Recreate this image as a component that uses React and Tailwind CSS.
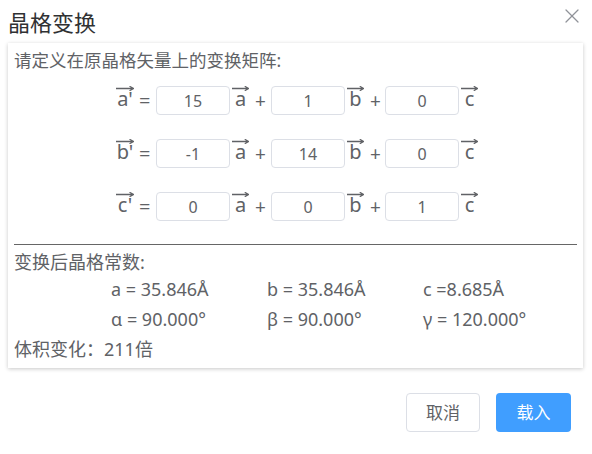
import { X } from 'lucide-react';

const font = { fontFamily: '"Noto Sans", "Noto Sans CJK SC", sans-serif' };

function Vec({ children, wide }) {
  return (
    <span className={`flex flex-col h-[29px] ${wide ? 'w-[18px]' : 'w-[17px]'}`}>
      <svg className="h-[5px] w-full shrink-0" viewBox="0 0 18 5" preserveAspectRatio="none">
        <path d="M0 2.5H17M13.5 0.3L17.6 2.5L13.5 4.7" fill="none" stroke="#606266" strokeWidth="1.3" />
      </svg>
      <span className="-mt-[2px] text-[20px] leading-[20px] text-center">{children}</span>
    </span>
  );
}

function Cell({ value }) {
  return (
    <div className="w-[74px] h-[29px] rounded-[4px] border border-[#dcdfe6] flex items-center justify-center text-[16px] text-[#606266]">
      {value}
    </div>
  );
}

const matrix = [
  ["a'", ['15', '1', '0']],
  ["b'", ['-1', '14', '0']],
  ["c'", ['0', '0', '1']],
];

export default function App() {
  return (
    <div className="w-[592px] h-[454px] bg-white text-[#606266]" style={font}>
      <div className="h-[43px] flex items-start justify-between pl-[8px] pr-[8px]">
        <span className="text-[22px] leading-[24px] mt-[10px] text-[#303133]">晶格变换</span>
        <X className="w-[24px] h-[24px] mt-[4px] text-[#909399]" strokeWidth={1.25} />
      </div>

      <div className="ml-[8px] mr-[9px] h-[325px] bg-white shadow-[0_1px_4px_rgba(0,0,0,0.22)] px-[6px] pt-[5px]">
        <div className="text-[17.5px] leading-[24px]">请定义在原晶格矢量上的变换矩阵:</div>

        <div className="mt-[2px] flex flex-col">
          {matrix.map(([label, vals]) => (
            <div key={label} className="h-[53px] flex items-center justify-center pl-[3px]">
              <Vec wide>{label}</Vec>
              <span className="ml-[5px] w-[10px] text-center text-[20px] leading-[20px] mt-[1px]">=</span>
              <span className="ml-[7px]"><Cell value={vals[0]} /></span>
              <span className="ml-[2px]"><Vec>a</Vec></span>
              <span className="ml-[6px] w-[8px] text-center text-[19px] leading-[20px] mt-[1px]">+</span>
              <span className="ml-[8px]"><Cell value={vals[1]} /></span>
              <span className="ml-[2px]"><Vec>b</Vec></span>
              <span className="ml-[6px] w-[8px] text-center text-[19px] leading-[20px] mt-[1px]">+</span>
              <span className="ml-[7px]"><Cell value={vals[2]} /></span>
              <span className="ml-[2px]"><Vec>c</Vec></span>
            </div>
          ))}
        </div>

        <div className="mt-[11px] h-px bg-[#666666]" />

        <div className="mt-[5px] text-[18px] leading-[24px]">变换后晶格常数:</div>
        <div className="grid grid-cols-[156px_156px_156px] pl-[97px] text-[18px]">
          <div className="h-[30px] leading-[30px]">a = 35.846Å</div>
          <div className="h-[30px] leading-[30px]">b = 35.846Å</div>
          <div className="h-[30px] leading-[30px]">c =8.685Å</div>
          <div className="h-[30px] leading-[30px]">α = 90.000°</div>
          <div className="h-[30px] leading-[30px]">β = 90.000°</div>
          <div className="h-[30px] leading-[30px]">γ = 120.000°</div>
        </div>
        <div className="text-[18px] leading-[30px]">体积变化：211倍</div>
      </div>

      <div className="flex justify-end gap-[16px] pr-[21px] pt-[25px]">
        <button className="w-[74px] h-[39px] rounded-[4px] border border-[#dcdfe6] bg-white text-[17px] text-[#606266]">取消</button>
        <button className="w-[75px] h-[39px] rounded-[4px] bg-[#409eff] text-[17px] text-white">载入</button>
      </div>
    </div>
  );
}
